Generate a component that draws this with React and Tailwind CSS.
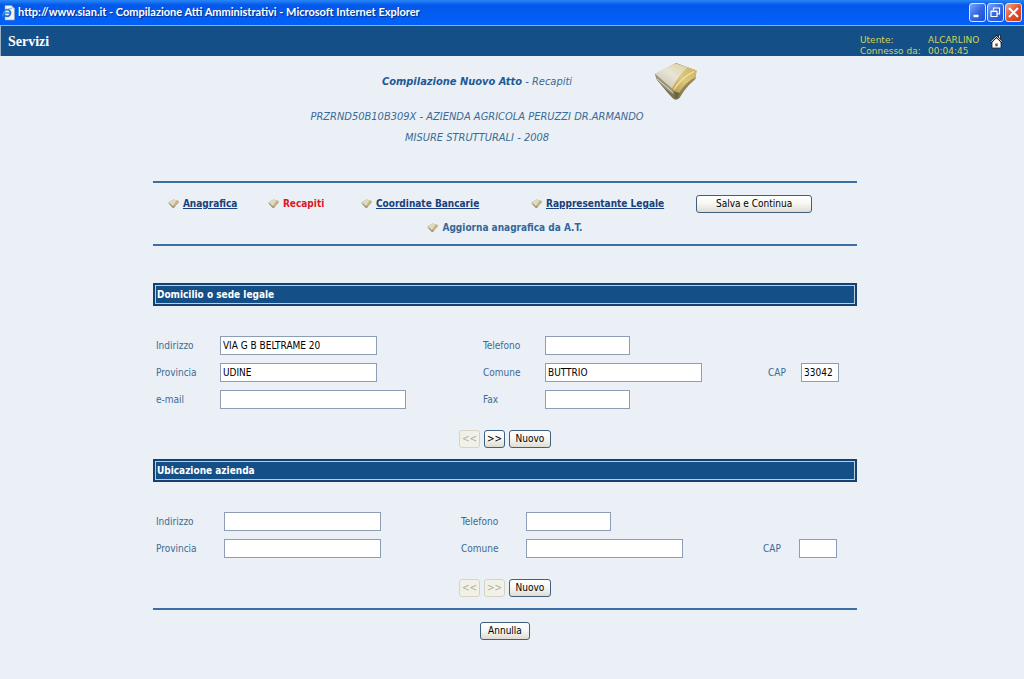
import React from "react";

const sans = "font-['DejaVu_Sans_Condensed','DejaVu_Sans',sans-serif]";

function BrowserIcon() {
  return (
    <svg width="13" height="16" viewBox="0 0 13 16" aria-hidden="true">
      <path d="M3 0.5h6.5L12.5 3.5v11.5H3z" fill="#f4f4ef" stroke="#8f9cb5" strokeWidth="0.6" />
      <path d="M9.5 0.5v3h3z" fill="#b9c4d8" />
      <circle cx="5.2" cy="8" r="3.3" fill="#dfeefd" stroke="#2173cf" strokeWidth="1.7" />
      <path d="M2.4 8h6" stroke="#2173cf" strokeWidth="1.3" />
      <path d="M0.8 11.5C0 8 5 3 9.6 3.6" fill="none" stroke="#63a7ec" strokeWidth="0.9" />
    </svg>
  );
}

function BookIcon() {
  return (
    <svg width="44" height="39" viewBox="0 0 44 39" aria-hidden="true">
      <defs>
        <linearGradient id="cover" x1="0" y1="1" x2="1" y2="0">
          <stop offset="0" stopColor="#bfb9a2" />
          <stop offset="0.5" stopColor="#e9e5d6" />
          <stop offset="1" stopColor="#d8c98c" />
        </linearGradient>
        <linearGradient id="strip" x1="0" y1="1" x2="1" y2="0">
          <stop offset="0" stopColor="#b79c4c" />
          <stop offset="0.5" stopColor="#dcc87c" />
          <stop offset="1" stopColor="#cdb362" />
        </linearGradient>
        <linearGradient id="side" x1="0" y1="1" x2="1" y2="0">
          <stop offset="0" stopColor="#5d583f" />
          <stop offset="0.4" stopColor="#8b7f55" />
          <stop offset="1" stopColor="#a8935a" />
        </linearGradient>
      </defs>
      <path d="M1 12L3 18L13 30L19 36.500Q22 39 25.500 36L30 29L35 23L41.500 17L42.500 8.500L22 1z" fill="url(#side)" />
      <path d="M1 12.500L18 26.500L20 33L12 27L3 18z" fill="#99957e" />
      <path d="M3 17L19 30.500" stroke="#d8d4c3" strokeWidth="1" />
      <path d="M1 12Q12 5 22 1.500L42.500 8.500Q31 16 22 28L18 26.500z" fill="url(#cover)" />
      <path d="M33.500 5.500L42.500 8.500L41.500 15Q32 20 25 31L19.500 29L18 26.500Q24 14 33.500 5.500z" fill="url(#strip)" />
      <path d="M20 27.500Q27 16 40 9.500" stroke="#f0e4ae" strokeWidth="1.300" fill="none" />
      <path d="M20.500 29.500L25.500 31L24 35.500Q22 37.500 20.500 35z" fill="#6a6344" />
    </svg>
  );
}

function MiniBook() {
  return (
    <svg width="11" height="10" viewBox="0 0 11 10" className="shrink-0" aria-hidden="true">
      <path d="M0.500 3.300L1 5L4.500 8.800Q5.500 9.600 6.500 8.500L8 6.300L10.300 4L10.600 2L5.500 0.500z" fill="#a0977a" />
      <path d="M0.500 3.300L5.500 0.500L10.600 2L4.900 6.900z" fill="#dfdac6" />
      <path d="M4.900 6.900L8.500 1.400L10.600 2L10.200 3.700L6.300 7.600z" fill="#c9b57a" />
    </svg>
  );
}

function HomeIcon() {
  return (
    <svg width="13" height="15" viewBox="0 0 13 15" aria-hidden="true">
      <path d="M8.500 1h2v5h-2z" fill="#fff" stroke="#151515" strokeWidth="0.800" />
      <path d="M2 7.500v6.500h9V7.500L6.500 3z" fill="#fff" stroke="#222" strokeWidth="0.800" />
      <path d="M0.700 8.200L6.500 2.400L12.300 8.200" fill="none" stroke="#111" strokeWidth="2.400" />
      <path d="M1 7.800L6.500 2.300L12 7.800" fill="none" stroke="#fff" strokeWidth="1" />
      <path d="M5.300 9.500h2.400v2.800H5.300z" fill="#555" />
    </svg>
  );
}

function WindowButton({ label, close, children }) {
  const tone = close
    ? "bg-linear-to-br from-[#f0a48c] via-[#e2512b] to-[#c63a17]"
    : "bg-linear-to-br from-[#7da6f5] via-[#3568e4] to-[#1f4fd0]";
  return (
    <button
      type="button"
      aria-label={label}
      className={`flex h-[19px] w-[17px] items-center justify-center rounded-[3px] border border-[#dbe6fb] ${tone}`}
    >
      <svg width="13" height="13" viewBox="0 0 13 13" fill="none" stroke="#fff" aria-hidden="true">
        {children}
      </svg>
    </button>
  );
}

function TitleBar() {
  return (
    <header className="flex h-[25px] items-center gap-[3px] bg-linear-to-b from-[#2a86f5] via-[#0358ea] via-20% to-[#0261fb] pl-[2px] pr-[2px]">
      <BrowserIcon />
      <h1 className="grow whitespace-nowrap font-['Lato',sans-serif] text-[11px] font-bold text-white [text-shadow:1px_1px_1px_#0a2a80]">
        http://www.sian.it - Compilazione Atti Amministrativi - Microsoft Internet Explorer
      </h1>
      <div className="flex gap-px">
        <WindowButton label="Riduci a icona">
          <path d="M2.500 10h5" strokeWidth="2.500" />
        </WindowButton>
        <WindowButton label="Ripristina">
          <path d="M4.500 4V2h6v6h-2M2 5.500h6v5H2zM2 5h6M4.500 2h6" strokeWidth="1.200" />
        </WindowButton>
        <WindowButton label="Chiudi" close>
          <path d="M2 2l9 9M11 2l-9 9" strokeWidth="2" />
        </WindowButton>
      </div>
    </header>
  );
}

function NavLink({ children, plain }) {
  return (
    <div className="flex items-center gap-1 whitespace-nowrap">
      <MiniBook />
      <a href="#" className={plain ? "text-[#34679a]" : "text-[#17407c] underline"}>
        {children}
      </a>
    </div>
  );
}

function Button({ children, className = "", disabled }) {
  const tone = disabled
    ? "border-[#d5d4c4] bg-[#f1f1e8] text-[#b0ae9c]"
    : "border-[#3f617f] bg-linear-to-b from-white via-[#f6f6f2] to-[#dedcd2] text-black";
  return (
    <button
      type="button"
      disabled={disabled}
      className={`h-[18px] rounded-[3px] border text-center text-[10px] leading-4 ${tone} ${className}`}
    >
      {children}
    </button>
  );
}

function SectionBar({ children }) {
  return (
    <div className="border-2 border-[#16406e] bg-[#144f87]">
      <h2 className="h-[19px] border border-[#b4cfe6] pl-px text-[10px] leading-[18px] font-bold text-white">{children}</h2>
    </div>
  );
}

function Field({ id, label, value = "", width, column = "" }) {
  return (
    <>
      <label htmlFor={id} className={`text-[#3d6a95] ${column}`}>
        {label}
      </label>
      <input
        id={id}
        type="text"
        defaultValue={value}
        className={`h-[19px] border border-[#8c9db5] bg-white px-[2px] text-[10px] text-black ${width}`}
      />
    </>
  );
}

function Pager({ hasNext }) {
  return (
    <div className="flex justify-center gap-1">
      <Button disabled className="w-[21px]">&lt;&lt;</Button>
      <Button disabled={!hasNext} className="w-[21px]">&gt;&gt;</Button>
      <Button className="w-[42px]">Nuovo</Button>
    </div>
  );
}

export default function App() {
  return (
    <div className={`min-h-screen bg-[#eaf0f5] text-[10px] ${sans}`}>
      <TitleBar />
      <div className="flex h-[31px] items-center border-t border-l border-[#9fb0c4] bg-[#144f87] pr-[21px] pl-[7px]">
        <div className="grow font-['Liberation_Serif',serif] text-[14px] font-bold text-white">Servizi</div>
        <dl className="grid grid-cols-[68px_60px] pt-[10px] font-['DejaVu_Sans',sans-serif] text-[9px] leading-[11px] whitespace-nowrap text-[#d3d35c]">
          <dt>Utente:</dt>
          <dd>ALCARLINO</dd>
          <dt>Connesso da:</dt>
          <dd>00:04:45</dd>
        </dl>
        <a href="#" aria-label="Home" className="pl-[2px]">
          <HomeIcon />
        </a>
      </div>

      <main className="pr-4 pb-10 pl-[2px]">
        <div className="mx-auto w-[70%] min-w-[680px]">
          <div className="pt-[6px] pr-14 text-center text-[11px] text-[#3a6a97] italic">
            <div className="grid grid-cols-[1fr_auto_1fr] items-center">
              <p className="col-start-2 leading-4">
                <strong className="text-[#1f5a94]">Compilazione Nuovo Atto</strong> - Recapiti
              </p>
              <div className="pl-[82px]">
                <BookIcon />
              </div>
            </div>
            <p className="pt-[5px] leading-[21px]">PRZRND50B10B309X - AZIENDA AGRICOLA PERUZZI DR.ARMANDO</p>
            <p className="leading-[21px]">MISURE STRUTTURALI - 2008</p>
          </div>

          <nav className="mt-[33px] border-y-2 border-[#3a6ea5] pt-[9px] pb-1 text-[10px] leading-6 font-bold">
            <div className="grid grid-cols-[100fr_93fr_170fr_165fr_161fr] items-center pl-[15px]">
              <NavLink>Anagrafica</NavLink>
              <div className="flex items-center gap-1 text-[#dd1822]">
                <MiniBook />
                <span aria-current="page">Recapiti</span>
              </div>
              <NavLink>Coordinate Bancarie</NavLink>
              <NavLink>Rappresentante Legale</NavLink>
              <Button className="w-[116px] font-normal">Salva e Continua</Button>
            </div>
            <div className="flex justify-center">
              <NavLink plain>Aggiorna anagrafica da A.T.</NavLink>
            </div>
          </nav>

          <form>
            <div className="pt-[37px]">
              <SectionBar>Domicilio o sede legale</SectionBar>
              <div className="grid auto-rows-[27px] grid-cols-[64fr_263fr_62fr_223fr_33fr_56fr] items-center pt-[26px] pb-[17px] pl-[3px]">
                <Field id="sede-indirizzo" label="Indirizzo" value="VIA G B BELTRAME 20" width="w-[157px]" />
                <Field id="sede-telefono" label="Telefono" width="w-[85px]" />
                <Field id="sede-provincia" label="Provincia" value="UDINE" width="w-[157px]" column="col-start-1" />
                <Field id="sede-comune" label="Comune" value="BUTTRIO" width="w-[157px]" />
                <Field id="sede-cap" label="CAP" value="33042" width="w-[38px]" />
                <Field id="sede-email" label="e-mail" width="w-[186px]" column="col-start-1" />
                <Field id="sede-fax" label="Fax" width="w-[85px]" />
              </div>
              <Pager hasNext />
            </div>

            <div className="pt-[11px]">
              <SectionBar>Ubicazione azienda</SectionBar>
              <div className="grid auto-rows-[27px] grid-cols-[68fr_237fr_65fr_237fr_36fr_58fr] items-center pt-[26px] pb-[17px] pl-[3px]">
                <Field id="azienda-indirizzo" label="Indirizzo" width="w-[157px]" />
                <Field id="azienda-telefono" label="Telefono" width="w-[85px]" />
                <Field id="azienda-provincia" label="Provincia" width="w-[157px]" column="col-start-1" />
                <Field id="azienda-comune" label="Comune" width="w-[157px]" />
                <Field id="azienda-cap" label="CAP" width="w-[38px]" />
              </div>
              <Pager />
            </div>

            <div className="mt-[11px] flex justify-center border-t-2 border-[#3a6ea5] pt-3">
              <Button className="w-[50px]">Annulla</Button>
            </div>
          </form>
        </div>
      </main>
    </div>
  );
}
